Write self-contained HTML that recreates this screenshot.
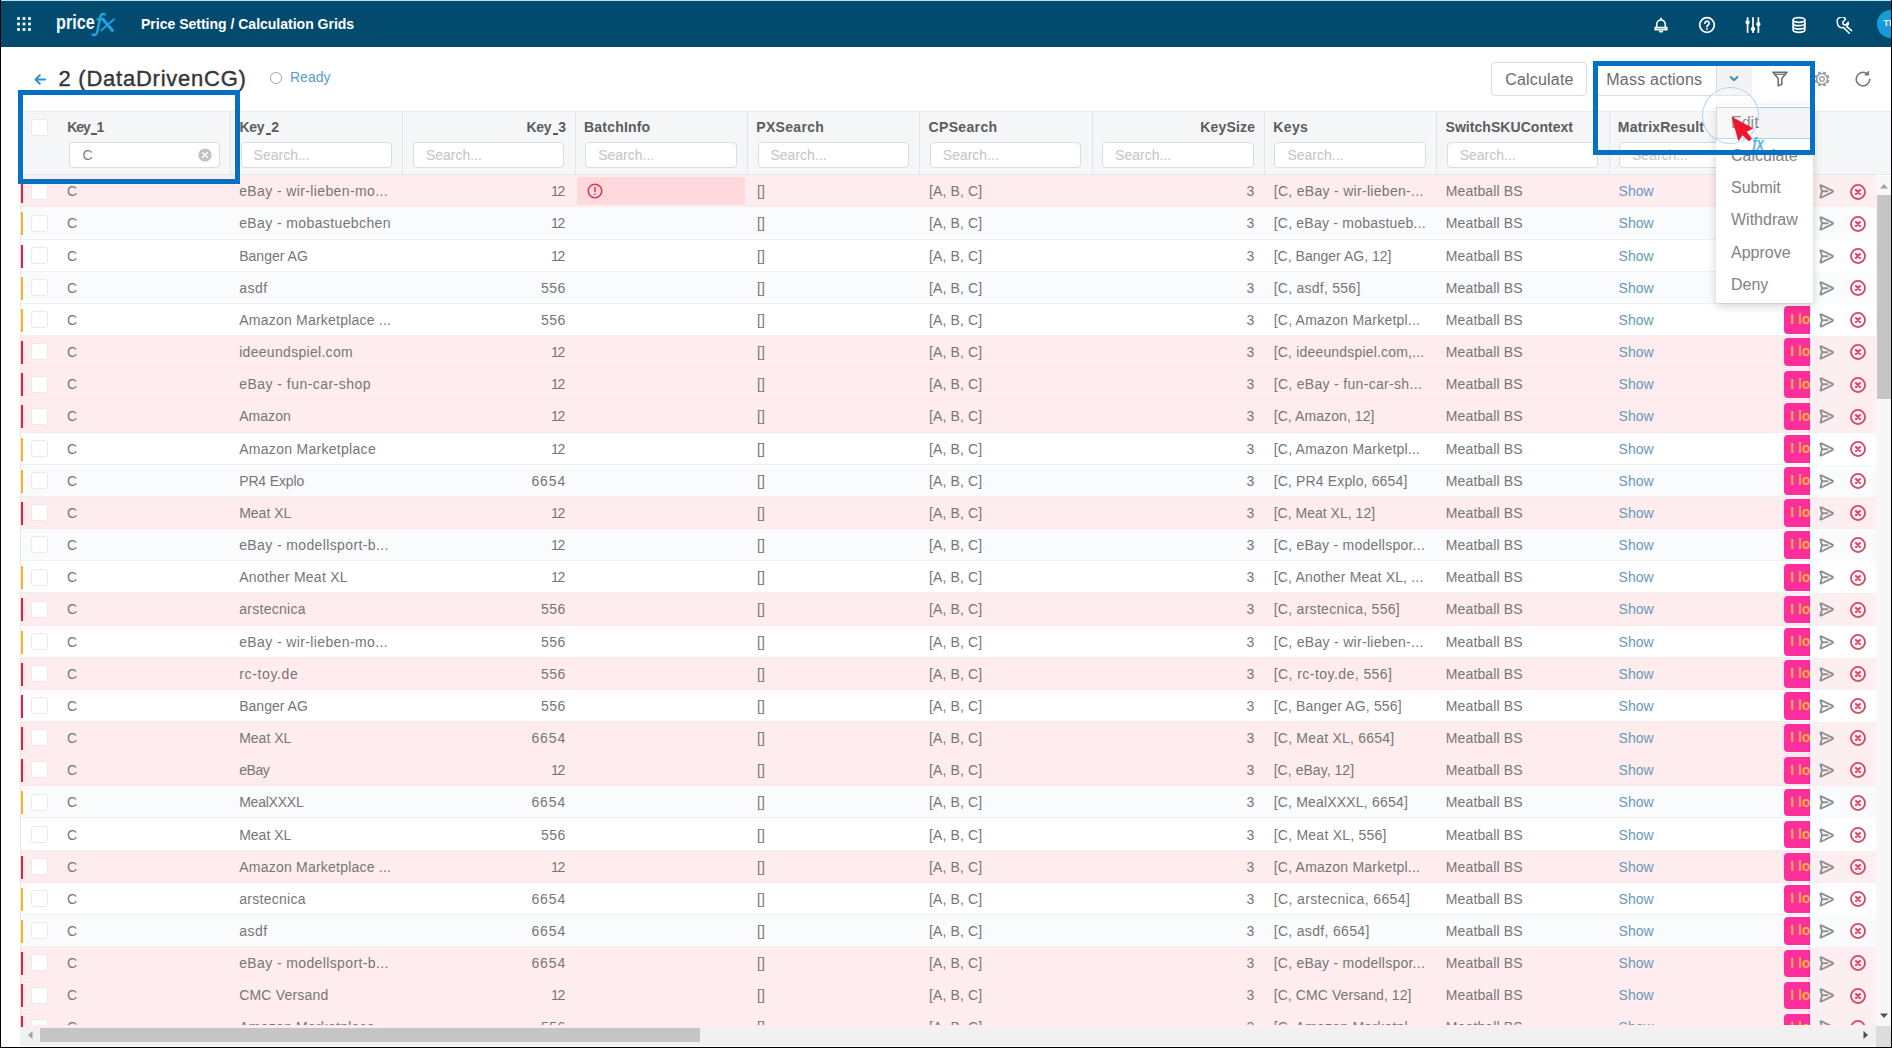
<!DOCTYPE html>
<html><head><meta charset="utf-8"><title>Calculation Grids</title>
<style>
*{box-sizing:border-box;margin:0;padding:0}
html,body{width:1892px;height:1048px;overflow:hidden;background:#fff}
body{font-family:"Liberation Sans",sans-serif;font-size:14px;color:#767676;position:relative}
.abs{position:absolute}
#topbar{left:0;top:1px;width:1892px;height:45.800px;background:#024b6e}
#topline{left:0;top:0;width:1892px;height:1px;background:#b9e1f0}
#title{left:141px;top:16px;color:#fff;font-weight:bold;font-size:14px;white-space:nowrap;line-height:16px}
#h1{left:58.5px;top:64.5px;font-size:22px;letter-spacing:0.76px;color:#363636;-webkit-text-stroke:0.4px #363636;white-space:nowrap;line-height:28px}
#ready{left:290px;top:69px;font-size:14px;color:#589dcb;line-height:16px}
.btn{border:1px solid #dcdcdc;border-radius:4px;background:#fff;font-size:16px;color:#6b6b6b;line-height:20px;white-space:nowrap}
#ghead{left:20px;top:111px;width:1871px;height:64.3px;background:#f5f6f8;border-top:1px solid #ebecee;border-bottom:1px solid #e6e7ea}
.hl{position:absolute;top:119px;font-weight:bold;font-size:14px;color:#5c5c5c;line-height:16px;white-space:nowrap}
.hr{text-align:right}
.inp{position:absolute;top:141.5px;height:26.5px;width:151.5px;border:1px solid #dcdcdc;border-radius:4px;background:#fff;font-size:14px;color:#c4c4c4;line-height:25px;padding-left:12px}
.us{display:inline-block;width:5.600px;height:1.5px;background:#5c5c5c;vertical-align:-2.6px;margin:0 0 0 1.300px}
.sep{position:absolute;top:112px;width:1px;height:63px;background:#e4e5e8}
.row{position:absolute;left:20px;width:1855.500px;height:32.16px;border-bottom:1px solid #eeeff1}
.row.P{background:#ffecef;border-bottom-color:#fde6ea}
.row.W{background:#fff}
.row.G{background:#fafbfd}
.mk{position:absolute;left:0;top:5px;width:3px;height:23px}
.mk.r{background:#e51c43}.mk.y{background:#f6b624}
.cb{position:absolute;left:10.5px;top:7.3px;width:17px;height:17px;border:1px solid #eaeaea;border-radius:3px;background:#fff}
.c{position:absolute;top:0;height:32.16px;line-height:32.6px;white-space:nowrap;overflow:hidden}
.show{color:#6899b9}
.badge{position:absolute;left:1763.5px;top:2.4px;width:60px;height:27.6px;border-radius:4px;background:#ff2e9d;color:#ffb13d;font-weight:bold;font-size:14px;line-height:27px;padding-left:6.800px;letter-spacing:-0.1px;white-space:nowrap;overflow:hidden}
.pin{position:absolute;left:1790px;top:0;width:65.5px;height:32.16px}
.row.P .pin{background:#fdeef1}.row.W .pin{background:#fff}.row.G .pin{background:#fafbfd}
.pin svg{position:absolute}
#menu{left:1716px;top:105px;width:97px;height:198px;background:#fff;border-radius:3px;box-shadow:0 3px 10px rgba(0,0,0,.18)}
.mi{position:absolute;left:15px;font-size:16px;color:#828282;line-height:20px;white-space:nowrap}
.hbox{position:absolute;border:5px solid #0670c4}
</style></head><body>

<div class="abs" id="topline"></div><div class="abs" id="topbar"></div>
<svg class="abs" style="left:17px;top:17px" width="14" height="14" viewBox="0 0 14 14"><rect x="0" y="0" width="3" height="3" rx="0.8" fill="#e6f3fa"/><rect x="5.5" y="0" width="3" height="3" rx="0.8" fill="#e6f3fa"/><rect x="11" y="0" width="3" height="3" rx="0.8" fill="#e6f3fa"/><rect x="0" y="5.5" width="3" height="3" rx="0.8" fill="#e6f3fa"/><rect x="5.5" y="5.5" width="3" height="3" rx="0.8" fill="#e6f3fa"/><rect x="11" y="5.5" width="3" height="3" rx="0.8" fill="#e6f3fa"/><rect x="0" y="11" width="3" height="3" rx="0.8" fill="#e6f3fa"/><rect x="5.5" y="11" width="3" height="3" rx="0.8" fill="#e6f3fa"/><rect x="11" y="11" width="3" height="3" rx="0.8" fill="#e6f3fa"/></svg>
<div class="abs" style="left:55.5px;top:9.8px;color:#f4fafd;font-weight:bold;font-size:19.5px;line-height:24px;transform:scaleX(0.83);transform-origin:0 0;white-space:nowrap">price</div>
<svg class="abs" style="left:90px;top:10px" width="28" height="28" viewBox="0 0 28 28" fill="none" stroke="#1fa2de" stroke-linecap="round"><path d="M14.6 4.300C11.400 3.100 10.500 5.600 10 8.200L7.400 21.500C6.800 24.600 4.900 25.600 2.800 24.600" stroke-width="2.500"/><path d="M7.300 9.300h6.600" stroke-width="2.100"/><path d="M12.800 9.200l9.600 11.200" stroke-width="3.100"/><path d="M24 9.200L11.200 20.400" stroke-width="1.900"/></svg>
<div class="abs" id="title">Price Setting / Calculation Grids</div>
<svg class="abs" style="left:1651.5px;top:16.2px" width="18" height="18" viewBox="0 0 18 18" fill="none" stroke="#fff" stroke-width="1.7" stroke-linecap="round" stroke-linejoin="round"><path d="M4.700 11.200V8.300a4.300 4.300 0 0 1 8.600 0v2.900" stroke-width="1.600"/><path d="M3 11.300h12v2.600H3z" fill="#fff" stroke-width="1.200"/><path d="M5 12.600h8" stroke="#8a9aa6" stroke-width="0.900"/><path d="M7.700 15.600h2.600" stroke-width="1.600"/><path d="M9 2.300v1.200" stroke-width="1.600"/></svg>
<svg class="abs" style="left:1697.5px;top:16.0px" width="18" height="18" viewBox="0 0 18 18" fill="none" stroke="#fff" stroke-width="1.7" stroke-linecap="round" stroke-linejoin="round"><circle cx="9" cy="9" r="7.3"/><path d="M6.9 7.2a2.1 2.1 0 1 1 3.2 1.8c-.7.45-1.1.9-1.1 1.7"/><path d="M9 12.9v.2"/></svg>
<svg class="abs" style="left:1743.5px;top:16.0px" width="18" height="18" viewBox="0 0 18 18" fill="none" stroke="#fff" stroke-width="1.7" stroke-linecap="round" stroke-linejoin="round"><path d="M3.6 1.8v14.4M9 1.8v14.4M14.4 1.8v14.4"/><circle cx="3.600" cy="6.300" r="1.300" fill="#fff"/><circle cx="9" cy="13" r="1.300" fill="#fff"/><circle cx="14.400" cy="8.200" r="1.300" fill="#fff"/></svg>
<svg class="abs" style="left:1789.5px;top:16.0px" width="18" height="18" viewBox="0 0 18 18" fill="none" stroke="#fff" stroke-width="1.7" stroke-linecap="round" stroke-linejoin="round"><ellipse cx="9" cy="4" rx="5.8" ry="2.3"/><path d="M3.2 4v10c0 1.3 2.6 2.3 5.8 2.3s5.8-1 5.8-2.3V4"/><path d="M3.2 7.4c0 1.3 2.6 2.3 5.8 2.3s5.8-1 5.8-2.3"/><path d="M3.2 10.8c0 1.3 2.6 2.3 5.8 2.3s5.8-1 5.8-2.3"/></svg>
<svg class="abs" style="left:1835.0px;top:16.8px" width="18" height="18" viewBox="0 0 18 18" fill="none" stroke="#fff" stroke-width="1.7" stroke-linecap="round" stroke-linejoin="round"><path d="M10.600 2.300A4.500 4.500 0 0 0 2.500 6.200 4.500 4.500 0 0 0 8.400 10.400L14.300 16.300M10.600 2.300 7.700 5.200 8.300 7.500 10.600 8.100 13.300 5.400A4.500 4.500 0 0 1 11.800 9.600L16.600 13.600" stroke-width="1.500"/></svg>
<div class="abs" style="left:1876.6px;top:9.7px;width:28px;height:28px;border-radius:50%;background:#1a9ad8"></div>
<div class="abs" style="left:1883.5px;top:18px;color:#e8f6fd;font-weight:bold;font-size:9px;line-height:11px;white-space:nowrap">TI</div>
<svg class="abs" style="left:33px;top:72px" width="14" height="14" viewBox="0 0 14 14" fill="none" stroke="#2f94cf" stroke-width="2.100" stroke-linecap="round" stroke-linejoin="round"><path d="M12 7.500H3M6.800 3.300 2.600 7.500l4.200 4.200"/></svg>
<div class="abs" id="h1">2 (DataDrivenCG)</div>
<div class="abs" style="left:270px;top:72px;width:11.500px;height:11.500px;border-radius:50%;border:1.800px solid #a3a3a3"></div>
<div class="abs" id="ready">Ready</div>
<div class="abs btn" style="left:1491px;top:62px;width:96px;height:34px;padding:7px 0 0 13.200px;letter-spacing:0.2px">Calculate</div>
<div class="abs btn" style="left:1596px;top:62px;width:156px;height:34px;padding:7px 0 0 9.300px;letter-spacing:0.22px">Mass actions</div>
<div class="abs" style="left:1716px;top:63px;width:35.5px;height:32px;background:#f3f3f5;border-left:1px solid #dcdcdc;border-radius:0 3px 3px 0"></div>
<svg class="abs" style="left:1728px;top:74px" width="12" height="10" viewBox="0 0 12 10" fill="none" stroke="#3f8bb8" stroke-width="1.900" stroke-linecap="round" stroke-linejoin="round"><path d="M2.700 3l3.300 3.200L9.300 3"/></svg>
<svg class="abs" style="left:1771px;top:70px" width="18" height="18" viewBox="0 0 18 18" fill="none" stroke="#6a6a6a" stroke-width="1.5" stroke-linejoin="round"><path d="M2 2.200h14l-5.200 6.300v5.800l-3.600 1.600V8.500z"/><path d="M3.300 4.300h11.400" stroke-width="1.200"/></svg>
<svg class="abs" style="left:1813.400px;top:70px" width="18" height="18" viewBox="0 0 18 18" fill="none" stroke="#9a9a9a"><circle cx="9" cy="9" r="5.400" stroke-width="1.400"/><g stroke-width="2.800"><path d="M13.90 11.03L15.93 11.87"/><path d="M11.03 13.90L11.87 15.93"/><path d="M6.97 13.90L6.13 15.93"/><path d="M4.10 11.03L2.07 11.87"/><path d="M4.10 6.97L2.07 6.13"/><path d="M6.97 4.10L6.13 2.07"/><path d="M11.03 4.10L11.87 2.07"/><path d="M13.90 6.97L15.93 6.13"/></g><circle cx="9" cy="9" r="2.300" stroke-width="1.300"/></svg>
<svg class="abs" style="left:1853.900px;top:70px" width="18" height="18" viewBox="0 0 18 18" fill="none" stroke="#747474" stroke-width="1.600" stroke-linecap="round" stroke-linejoin="round"><path d="M15.800 9.300a6.800 6.800 0 1 1-3.300-6"/><path d="M14.700 1.400v3.700h-3.700z" fill="#747474" stroke-width="0.800"/></svg>
<div class="abs" id="ghead"></div>
<div class="cb" style="left:30.5px;top:118.500px"></div>
<div class="hl" style="left:67.3px"><span style="letter-spacing:-1.1px">Key</span><i class="us"></i>1</div>
<div class="inp" style="left:68.5px;color:#7d7d7d;padding-left:13px">C</div>
<svg class="abs" style="left:197.500px;top:148px" width="14" height="14" viewBox="0 0 14 14"><circle cx="7" cy="7" r="6.600" fill="#c2c2c2"/><path d="M4.700 4.700l4.600 4.600M9.300 4.700l-4.600 4.600" stroke="#fff" stroke-width="1.500" stroke-linecap="round"/></svg>
<div class="sep" style="left:230.1px"></div>
<div class="hl" style="left:239.4px"><span style="letter-spacing:-0.25px">Key</span><i class="us"></i>2</div>
<div class="inp" style="left:240.6px">Search...</div>
<div class="sep" style="left:402.4px"></div>
<div class="hl hr" style="left:402.9px;width:163.2px"><span style="letter-spacing:-0.25px">Key</span><i class="us"></i>3</div>
<div class="inp" style="left:412.9px">Search...</div>
<div class="sep" style="left:574.7px"></div>
<div class="hl" style="left:584.0px"><span style="letter-spacing:0.2px">BatchInfo</span></div>
<div class="inp" style="left:585.2px">Search...</div>
<div class="sep" style="left:747.0px"></div>
<div class="hl" style="left:756.3px"><span style="letter-spacing:0.3px">PXSearch</span></div>
<div class="inp" style="left:757.5px">Search...</div>
<div class="sep" style="left:919.3px"></div>
<div class="hl" style="left:928.6px"><span style="letter-spacing:0.33px">CPSearch</span></div>
<div class="inp" style="left:929.8px">Search...</div>
<div class="sep" style="left:1091.6px"></div>
<div class="hl hr" style="left:1092.1px;width:163.2px"><span style="letter-spacing:0.2px">KeySize</span></div>
<div class="inp" style="left:1102.1px">Search...</div>
<div class="sep" style="left:1263.9px"></div>
<div class="hl" style="left:1273.2px"><span style="letter-spacing:0.4px">Keys</span></div>
<div class="inp" style="left:1274.4px">Search...</div>
<div class="sep" style="left:1436.2px"></div>
<div class="hl" style="left:1445.5px"><span style="letter-spacing:0.05px">SwitchSKUContext</span></div>
<div class="inp" style="left:1446.7px">Search...</div>
<div class="sep" style="left:1608.5px"></div>
<div class="hl" style="left:1617.8px"><span style="letter-spacing:0.2px">MatrixResult</span></div>
<div class="inp" style="left:1619.0px">Search...</div>
<div class="sep" style="left:1780.8px"></div>
<div class="row P" style="top:175.30px"><div class="mk r"></div><div class="cb"></div><div class="c " style="left:47.0px;width:150.0px"><span style="letter-spacing:-0.025px">C</span></div><div class="c " style="left:219.2px;width:165.0px"><span style="letter-spacing:0.380px">eBay - wir-lieben-mo...</span></div><div class="c " style="left:392.0px;width:153.2px;text-align:right"><span style="letter-spacing:-1.278px;margin-right:1.278px">12</span></div><div style="position:absolute;left:557px;top:1.500px;width:168px;height:28.500px;background:#ffd9dc;border-radius:2px"></div><svg style="position:absolute;left:567px;top:8px" width="16" height="16" viewBox="0 0 16 16" fill="none" stroke="#d93553" stroke-width="1.500" stroke-linecap="round"><circle cx="8" cy="8" r="6.800"/><path d="M8 4.600v3.800M8 11v.2"/></svg><div class="c " style="left:737.0px;width:40.0px"><span style="letter-spacing:0.219px">[]</span></div><div class="c " style="left:909.0px;width:150.0px"><span style="letter-spacing:0.134px">[A, B, C]</span></div><div class="c " style="left:1081.0px;width:153.4px;text-align:right"><span style="letter-spacing:0.203px;margin-right:-0.203px">3</span></div><div class="c " style="left:1253.7px;width:165.0px"><span style="letter-spacing:0.301px">[C, eBay - wir-lieben-...</span></div><div class="c " style="left:1425.7px;width:160.0px"><span style="letter-spacing:0.152px">Meatball BS</span></div><div class="c show" style="left:1598.5px;width:100.0px"><span style="letter-spacing:0.056px">Show</span></div><div class="badge">I lo</div><div class="pin"><svg style="left:6.500px;top:7px" width="19" height="19" viewBox="0 0 19 19" fill="none" stroke="#909090" stroke-width="1.900" stroke-linejoin="round" stroke-linecap="round"><path d="M4.300 3.300Q3.300 2.800 3.500 3.900L5 9.300 3.500 14.900Q3.300 15.900 4.300 15.500L15.400 10.100Q16.600 9.300 15.400 8.600z"/><path d="M5.200 9.300h5.400"/></svg><svg style="left:39.300px;top:7.300px" width="18" height="18" viewBox="0 0 18 18" fill="none" stroke="#db4562" stroke-width="1.800" stroke-linecap="round"><circle cx="9" cy="9" r="7.050"/><path d="M7 7l4 4M11 7l-4 4" stroke-width="2.100"/></svg></div></div>
<div class="row G" style="top:207.46px"><div class="mk y"></div><div class="cb"></div><div class="c " style="left:47.0px;width:150.0px"><span style="letter-spacing:-0.025px">C</span></div><div class="c " style="left:219.2px;width:165.0px"><span style="letter-spacing:0.390px">eBay - mobastuebchen</span></div><div class="c " style="left:392.0px;width:153.2px;text-align:right"><span style="letter-spacing:-1.278px;margin-right:1.278px">12</span></div><div class="c " style="left:737.0px;width:40.0px"><span style="letter-spacing:0.219px">[]</span></div><div class="c " style="left:909.0px;width:150.0px"><span style="letter-spacing:0.134px">[A, B, C]</span></div><div class="c " style="left:1081.0px;width:153.4px;text-align:right"><span style="letter-spacing:0.203px;margin-right:-0.203px">3</span></div><div class="c " style="left:1253.7px;width:165.0px"><span style="letter-spacing:0.224px">[C, eBay - mobastueb...</span></div><div class="c " style="left:1425.7px;width:160.0px"><span style="letter-spacing:0.152px">Meatball BS</span></div><div class="c show" style="left:1598.5px;width:100.0px"><span style="letter-spacing:0.056px">Show</span></div><div class="badge">I lo</div><div class="pin"><svg style="left:6.500px;top:7px" width="19" height="19" viewBox="0 0 19 19" fill="none" stroke="#909090" stroke-width="1.900" stroke-linejoin="round" stroke-linecap="round"><path d="M4.300 3.300Q3.300 2.800 3.500 3.900L5 9.300 3.500 14.900Q3.300 15.900 4.300 15.500L15.400 10.100Q16.600 9.300 15.400 8.600z"/><path d="M5.200 9.300h5.400"/></svg><svg style="left:39.300px;top:7.300px" width="18" height="18" viewBox="0 0 18 18" fill="none" stroke="#db4562" stroke-width="1.800" stroke-linecap="round"><circle cx="9" cy="9" r="7.050"/><path d="M7 7l4 4M11 7l-4 4" stroke-width="2.100"/></svg></div></div>
<div class="row W" style="top:239.62px"><div class="mk r"></div><div class="cb"></div><div class="c " style="left:47.0px;width:150.0px"><span style="letter-spacing:-0.025px">C</span></div><div class="c " style="left:219.2px;width:165.0px"><span style="letter-spacing:0.025px">Banger AG</span></div><div class="c " style="left:392.0px;width:153.2px;text-align:right"><span style="letter-spacing:-1.278px;margin-right:1.278px">12</span></div><div class="c " style="left:737.0px;width:40.0px"><span style="letter-spacing:0.219px">[]</span></div><div class="c " style="left:909.0px;width:150.0px"><span style="letter-spacing:0.134px">[A, B, C]</span></div><div class="c " style="left:1081.0px;width:153.4px;text-align:right"><span style="letter-spacing:0.203px;margin-right:-0.203px">3</span></div><div class="c " style="left:1253.7px;width:165.0px"><span style="letter-spacing:0.017px">[C, Banger AG, 12]</span></div><div class="c " style="left:1425.7px;width:160.0px"><span style="letter-spacing:0.152px">Meatball BS</span></div><div class="c show" style="left:1598.5px;width:100.0px"><span style="letter-spacing:0.056px">Show</span></div><div class="badge">I lo</div><div class="pin"><svg style="left:6.500px;top:7px" width="19" height="19" viewBox="0 0 19 19" fill="none" stroke="#909090" stroke-width="1.900" stroke-linejoin="round" stroke-linecap="round"><path d="M4.300 3.300Q3.300 2.800 3.500 3.900L5 9.300 3.500 14.900Q3.300 15.900 4.300 15.500L15.400 10.100Q16.600 9.300 15.400 8.600z"/><path d="M5.200 9.300h5.400"/></svg><svg style="left:39.300px;top:7.300px" width="18" height="18" viewBox="0 0 18 18" fill="none" stroke="#db4562" stroke-width="1.800" stroke-linecap="round"><circle cx="9" cy="9" r="7.050"/><path d="M7 7l4 4M11 7l-4 4" stroke-width="2.100"/></svg></div></div>
<div class="row G" style="top:271.78px"><div class="mk y"></div><div class="cb"></div><div class="c " style="left:47.0px;width:150.0px"><span style="letter-spacing:-0.025px">C</span></div><div class="c " style="left:219.2px;width:165.0px"><span style="letter-spacing:0.477px">asdf</span></div><div class="c " style="left:392.0px;width:153.2px;text-align:right"><span style="letter-spacing:0.470px;margin-right:-0.470px">556</span></div><div class="c " style="left:737.0px;width:40.0px"><span style="letter-spacing:0.219px">[]</span></div><div class="c " style="left:909.0px;width:150.0px"><span style="letter-spacing:0.134px">[A, B, C]</span></div><div class="c " style="left:1081.0px;width:153.4px;text-align:right"><span style="letter-spacing:0.203px;margin-right:-0.203px">3</span></div><div class="c " style="left:1253.7px;width:165.0px"><span style="letter-spacing:0.255px">[C, asdf, 556]</span></div><div class="c " style="left:1425.7px;width:160.0px"><span style="letter-spacing:0.152px">Meatball BS</span></div><div class="c show" style="left:1598.5px;width:100.0px"><span style="letter-spacing:0.056px">Show</span></div><div class="badge">I lo</div><div class="pin"><svg style="left:6.500px;top:7px" width="19" height="19" viewBox="0 0 19 19" fill="none" stroke="#909090" stroke-width="1.900" stroke-linejoin="round" stroke-linecap="round"><path d="M4.300 3.300Q3.300 2.800 3.500 3.900L5 9.300 3.500 14.900Q3.300 15.900 4.300 15.500L15.400 10.100Q16.600 9.300 15.400 8.600z"/><path d="M5.200 9.300h5.400"/></svg><svg style="left:39.300px;top:7.300px" width="18" height="18" viewBox="0 0 18 18" fill="none" stroke="#db4562" stroke-width="1.800" stroke-linecap="round"><circle cx="9" cy="9" r="7.050"/><path d="M7 7l4 4M11 7l-4 4" stroke-width="2.100"/></svg></div></div>
<div class="row W" style="top:303.94px"><div class="mk y"></div><div class="cb"></div><div class="c " style="left:47.0px;width:150.0px"><span style="letter-spacing:-0.025px">C</span></div><div class="c " style="left:219.2px;width:165.0px"><span style="letter-spacing:0.226px">Amazon Marketplace ...</span></div><div class="c " style="left:392.0px;width:153.2px;text-align:right"><span style="letter-spacing:0.470px;margin-right:-0.470px">556</span></div><div class="c " style="left:737.0px;width:40.0px"><span style="letter-spacing:0.219px">[]</span></div><div class="c " style="left:909.0px;width:150.0px"><span style="letter-spacing:0.134px">[A, B, C]</span></div><div class="c " style="left:1081.0px;width:153.4px;text-align:right"><span style="letter-spacing:0.203px;margin-right:-0.203px">3</span></div><div class="c " style="left:1253.7px;width:165.0px"><span style="letter-spacing:0.223px">[C, Amazon Marketpl...</span></div><div class="c " style="left:1425.7px;width:160.0px"><span style="letter-spacing:0.152px">Meatball BS</span></div><div class="c show" style="left:1598.5px;width:100.0px"><span style="letter-spacing:0.056px">Show</span></div><div class="badge">I lo</div><div class="pin"><svg style="left:6.500px;top:7px" width="19" height="19" viewBox="0 0 19 19" fill="none" stroke="#909090" stroke-width="1.900" stroke-linejoin="round" stroke-linecap="round"><path d="M4.300 3.300Q3.300 2.800 3.500 3.900L5 9.300 3.500 14.900Q3.300 15.900 4.300 15.500L15.400 10.100Q16.600 9.300 15.400 8.600z"/><path d="M5.200 9.300h5.400"/></svg><svg style="left:39.300px;top:7.300px" width="18" height="18" viewBox="0 0 18 18" fill="none" stroke="#db4562" stroke-width="1.800" stroke-linecap="round"><circle cx="9" cy="9" r="7.050"/><path d="M7 7l4 4M11 7l-4 4" stroke-width="2.100"/></svg></div></div>
<div class="row P" style="top:336.10px"><div class="mk r"></div><div class="cb"></div><div class="c " style="left:47.0px;width:150.0px"><span style="letter-spacing:-0.025px">C</span></div><div class="c " style="left:219.2px;width:165.0px"><span style="letter-spacing:0.302px">ideeundspiel.com</span></div><div class="c " style="left:392.0px;width:153.2px;text-align:right"><span style="letter-spacing:-1.278px;margin-right:1.278px">12</span></div><div class="c " style="left:737.0px;width:40.0px"><span style="letter-spacing:0.219px">[]</span></div><div class="c " style="left:909.0px;width:150.0px"><span style="letter-spacing:0.134px">[A, B, C]</span></div><div class="c " style="left:1081.0px;width:153.4px;text-align:right"><span style="letter-spacing:0.203px;margin-right:-0.203px">3</span></div><div class="c " style="left:1253.7px;width:165.0px"><span style="letter-spacing:0.183px">[C, ideeundspiel.com,...</span></div><div class="c " style="left:1425.7px;width:160.0px"><span style="letter-spacing:0.152px">Meatball BS</span></div><div class="c show" style="left:1598.5px;width:100.0px"><span style="letter-spacing:0.056px">Show</span></div><div class="badge">I lo</div><div class="pin"><svg style="left:6.500px;top:7px" width="19" height="19" viewBox="0 0 19 19" fill="none" stroke="#909090" stroke-width="1.900" stroke-linejoin="round" stroke-linecap="round"><path d="M4.300 3.300Q3.300 2.800 3.500 3.900L5 9.300 3.500 14.900Q3.300 15.900 4.300 15.500L15.400 10.100Q16.600 9.300 15.400 8.600z"/><path d="M5.200 9.300h5.400"/></svg><svg style="left:39.300px;top:7.300px" width="18" height="18" viewBox="0 0 18 18" fill="none" stroke="#db4562" stroke-width="1.800" stroke-linecap="round"><circle cx="9" cy="9" r="7.050"/><path d="M7 7l4 4M11 7l-4 4" stroke-width="2.100"/></svg></div></div>
<div class="row P" style="top:368.26px"><div class="mk r"></div><div class="cb"></div><div class="c " style="left:47.0px;width:150.0px"><span style="letter-spacing:-0.025px">C</span></div><div class="c " style="left:219.2px;width:165.0px"><span style="letter-spacing:0.464px">eBay - fun-car-shop</span></div><div class="c " style="left:392.0px;width:153.2px;text-align:right"><span style="letter-spacing:-1.278px;margin-right:1.278px">12</span></div><div class="c " style="left:737.0px;width:40.0px"><span style="letter-spacing:0.219px">[]</span></div><div class="c " style="left:909.0px;width:150.0px"><span style="letter-spacing:0.134px">[A, B, C]</span></div><div class="c " style="left:1081.0px;width:153.4px;text-align:right"><span style="letter-spacing:0.203px;margin-right:-0.203px">3</span></div><div class="c " style="left:1253.7px;width:165.0px"><span style="letter-spacing:0.316px">[C, eBay - fun-car-sh...</span></div><div class="c " style="left:1425.7px;width:160.0px"><span style="letter-spacing:0.152px">Meatball BS</span></div><div class="c show" style="left:1598.5px;width:100.0px"><span style="letter-spacing:0.056px">Show</span></div><div class="badge">I lo</div><div class="pin"><svg style="left:6.500px;top:7px" width="19" height="19" viewBox="0 0 19 19" fill="none" stroke="#909090" stroke-width="1.900" stroke-linejoin="round" stroke-linecap="round"><path d="M4.300 3.300Q3.300 2.800 3.500 3.900L5 9.300 3.500 14.900Q3.300 15.900 4.300 15.500L15.400 10.100Q16.600 9.300 15.400 8.600z"/><path d="M5.200 9.300h5.400"/></svg><svg style="left:39.300px;top:7.300px" width="18" height="18" viewBox="0 0 18 18" fill="none" stroke="#db4562" stroke-width="1.800" stroke-linecap="round"><circle cx="9" cy="9" r="7.050"/><path d="M7 7l4 4M11 7l-4 4" stroke-width="2.100"/></svg></div></div>
<div class="row P" style="top:400.42px"><div class="mk r"></div><div class="cb"></div><div class="c " style="left:47.0px;width:150.0px"><span style="letter-spacing:-0.025px">C</span></div><div class="c " style="left:219.2px;width:165.0px"><span style="letter-spacing:0.048px">Amazon</span></div><div class="c " style="left:392.0px;width:153.2px;text-align:right"><span style="letter-spacing:-1.278px;margin-right:1.278px">12</span></div><div class="c " style="left:737.0px;width:40.0px"><span style="letter-spacing:0.219px">[]</span></div><div class="c " style="left:909.0px;width:150.0px"><span style="letter-spacing:0.134px">[A, B, C]</span></div><div class="c " style="left:1081.0px;width:153.4px;text-align:right"><span style="letter-spacing:0.203px;margin-right:-0.203px">3</span></div><div class="c " style="left:1253.7px;width:165.0px"><span style="letter-spacing:0.085px">[C, Amazon, 12]</span></div><div class="c " style="left:1425.7px;width:160.0px"><span style="letter-spacing:0.152px">Meatball BS</span></div><div class="c show" style="left:1598.5px;width:100.0px"><span style="letter-spacing:0.056px">Show</span></div><div class="badge">I lo</div><div class="pin"><svg style="left:6.500px;top:7px" width="19" height="19" viewBox="0 0 19 19" fill="none" stroke="#909090" stroke-width="1.900" stroke-linejoin="round" stroke-linecap="round"><path d="M4.300 3.300Q3.300 2.800 3.500 3.900L5 9.300 3.500 14.900Q3.300 15.900 4.300 15.500L15.400 10.100Q16.600 9.300 15.400 8.600z"/><path d="M5.200 9.300h5.400"/></svg><svg style="left:39.300px;top:7.300px" width="18" height="18" viewBox="0 0 18 18" fill="none" stroke="#db4562" stroke-width="1.800" stroke-linecap="round"><circle cx="9" cy="9" r="7.050"/><path d="M7 7l4 4M11 7l-4 4" stroke-width="2.100"/></svg></div></div>
<div class="row W" style="top:432.58px"><div class="mk y"></div><div class="cb"></div><div class="c " style="left:47.0px;width:150.0px"><span style="letter-spacing:-0.025px">C</span></div><div class="c " style="left:219.2px;width:165.0px"><span style="letter-spacing:0.293px">Amazon Marketplace</span></div><div class="c " style="left:392.0px;width:153.2px;text-align:right"><span style="letter-spacing:-1.278px;margin-right:1.278px">12</span></div><div class="c " style="left:737.0px;width:40.0px"><span style="letter-spacing:0.219px">[]</span></div><div class="c " style="left:909.0px;width:150.0px"><span style="letter-spacing:0.134px">[A, B, C]</span></div><div class="c " style="left:1081.0px;width:153.4px;text-align:right"><span style="letter-spacing:0.203px;margin-right:-0.203px">3</span></div><div class="c " style="left:1253.7px;width:165.0px"><span style="letter-spacing:0.223px">[C, Amazon Marketpl...</span></div><div class="c " style="left:1425.7px;width:160.0px"><span style="letter-spacing:0.152px">Meatball BS</span></div><div class="c show" style="left:1598.5px;width:100.0px"><span style="letter-spacing:0.056px">Show</span></div><div class="badge">I lo</div><div class="pin"><svg style="left:6.500px;top:7px" width="19" height="19" viewBox="0 0 19 19" fill="none" stroke="#909090" stroke-width="1.900" stroke-linejoin="round" stroke-linecap="round"><path d="M4.300 3.300Q3.300 2.800 3.500 3.900L5 9.300 3.500 14.900Q3.300 15.900 4.300 15.500L15.400 10.100Q16.600 9.300 15.400 8.600z"/><path d="M5.200 9.300h5.400"/></svg><svg style="left:39.300px;top:7.300px" width="18" height="18" viewBox="0 0 18 18" fill="none" stroke="#db4562" stroke-width="1.800" stroke-linecap="round"><circle cx="9" cy="9" r="7.050"/><path d="M7 7l4 4M11 7l-4 4" stroke-width="2.100"/></svg></div></div>
<div class="row G" style="top:464.74px"><div class="mk y"></div><div class="cb"></div><div class="c " style="left:47.0px;width:150.0px"><span style="letter-spacing:-0.025px">C</span></div><div class="c " style="left:219.2px;width:165.0px"><span style="letter-spacing:-0.145px">PR4 Explo</span></div><div class="c " style="left:392.0px;width:153.2px;text-align:right"><span style="letter-spacing:0.881px;margin-right:-0.881px">6654</span></div><div class="c " style="left:737.0px;width:40.0px"><span style="letter-spacing:0.219px">[]</span></div><div class="c " style="left:909.0px;width:150.0px"><span style="letter-spacing:0.134px">[A, B, C]</span></div><div class="c " style="left:1081.0px;width:153.4px;text-align:right"><span style="letter-spacing:0.203px;margin-right:-0.203px">3</span></div><div class="c " style="left:1253.7px;width:165.0px"><span style="letter-spacing:0.150px">[C, PR4 Explo, 6654]</span></div><div class="c " style="left:1425.7px;width:160.0px"><span style="letter-spacing:0.152px">Meatball BS</span></div><div class="c show" style="left:1598.5px;width:100.0px"><span style="letter-spacing:0.056px">Show</span></div><div class="badge">I lo</div><div class="pin"><svg style="left:6.500px;top:7px" width="19" height="19" viewBox="0 0 19 19" fill="none" stroke="#909090" stroke-width="1.900" stroke-linejoin="round" stroke-linecap="round"><path d="M4.300 3.300Q3.300 2.800 3.500 3.900L5 9.300 3.500 14.900Q3.300 15.900 4.300 15.500L15.400 10.100Q16.600 9.300 15.400 8.600z"/><path d="M5.200 9.300h5.400"/></svg><svg style="left:39.300px;top:7.300px" width="18" height="18" viewBox="0 0 18 18" fill="none" stroke="#db4562" stroke-width="1.800" stroke-linecap="round"><circle cx="9" cy="9" r="7.050"/><path d="M7 7l4 4M11 7l-4 4" stroke-width="2.100"/></svg></div></div>
<div class="row P" style="top:496.90px"><div class="mk r"></div><div class="cb"></div><div class="c " style="left:47.0px;width:150.0px"><span style="letter-spacing:-0.025px">C</span></div><div class="c " style="left:219.2px;width:165.0px"><span style="letter-spacing:-0.007px">Meat XL</span></div><div class="c " style="left:392.0px;width:153.2px;text-align:right"><span style="letter-spacing:-1.278px;margin-right:1.278px">12</span></div><div class="c " style="left:737.0px;width:40.0px"><span style="letter-spacing:0.219px">[]</span></div><div class="c " style="left:909.0px;width:150.0px"><span style="letter-spacing:0.134px">[A, B, C]</span></div><div class="c " style="left:1081.0px;width:153.4px;text-align:right"><span style="letter-spacing:0.203px;margin-right:-0.203px">3</span></div><div class="c " style="left:1253.7px;width:165.0px"><span style="letter-spacing:0.015px">[C, Meat XL, 12]</span></div><div class="c " style="left:1425.7px;width:160.0px"><span style="letter-spacing:0.152px">Meatball BS</span></div><div class="c show" style="left:1598.5px;width:100.0px"><span style="letter-spacing:0.056px">Show</span></div><div class="badge">I lo</div><div class="pin"><svg style="left:6.500px;top:7px" width="19" height="19" viewBox="0 0 19 19" fill="none" stroke="#909090" stroke-width="1.900" stroke-linejoin="round" stroke-linecap="round"><path d="M4.300 3.300Q3.300 2.800 3.500 3.900L5 9.300 3.500 14.900Q3.300 15.900 4.300 15.500L15.400 10.100Q16.600 9.300 15.400 8.600z"/><path d="M5.200 9.300h5.400"/></svg><svg style="left:39.300px;top:7.300px" width="18" height="18" viewBox="0 0 18 18" fill="none" stroke="#db4562" stroke-width="1.800" stroke-linecap="round"><circle cx="9" cy="9" r="7.050"/><path d="M7 7l4 4M11 7l-4 4" stroke-width="2.100"/></svg></div></div>
<div class="row G" style="top:529.06px"><div class="cb"></div><div class="c " style="left:47.0px;width:150.0px"><span style="letter-spacing:-0.025px">C</span></div><div class="c " style="left:219.2px;width:165.0px"><span style="letter-spacing:0.380px">eBay - modellsport-b...</span></div><div class="c " style="left:392.0px;width:153.2px;text-align:right"><span style="letter-spacing:-1.278px;margin-right:1.278px">12</span></div><div class="c " style="left:737.0px;width:40.0px"><span style="letter-spacing:0.219px">[]</span></div><div class="c " style="left:909.0px;width:150.0px"><span style="letter-spacing:0.134px">[A, B, C]</span></div><div class="c " style="left:1081.0px;width:153.4px;text-align:right"><span style="letter-spacing:0.203px;margin-right:-0.203px">3</span></div><div class="c " style="left:1253.7px;width:165.0px"><span style="letter-spacing:0.243px">[C, eBay - modellspor...</span></div><div class="c " style="left:1425.7px;width:160.0px"><span style="letter-spacing:0.152px">Meatball BS</span></div><div class="c show" style="left:1598.5px;width:100.0px"><span style="letter-spacing:0.056px">Show</span></div><div class="badge">I lo</div><div class="pin"><svg style="left:6.500px;top:7px" width="19" height="19" viewBox="0 0 19 19" fill="none" stroke="#909090" stroke-width="1.900" stroke-linejoin="round" stroke-linecap="round"><path d="M4.300 3.300Q3.300 2.800 3.500 3.900L5 9.300 3.500 14.900Q3.300 15.900 4.300 15.500L15.400 10.100Q16.600 9.300 15.400 8.600z"/><path d="M5.200 9.300h5.400"/></svg><svg style="left:39.300px;top:7.300px" width="18" height="18" viewBox="0 0 18 18" fill="none" stroke="#db4562" stroke-width="1.800" stroke-linecap="round"><circle cx="9" cy="9" r="7.050"/><path d="M7 7l4 4M11 7l-4 4" stroke-width="2.100"/></svg></div></div>
<div class="row W" style="top:561.22px"><div class="mk y"></div><div class="cb"></div><div class="c " style="left:47.0px;width:150.0px"><span style="letter-spacing:-0.025px">C</span></div><div class="c " style="left:219.2px;width:165.0px"><span style="letter-spacing:0.231px">Another Meat XL</span></div><div class="c " style="left:392.0px;width:153.2px;text-align:right"><span style="letter-spacing:-1.278px;margin-right:1.278px">12</span></div><div class="c " style="left:737.0px;width:40.0px"><span style="letter-spacing:0.219px">[]</span></div><div class="c " style="left:909.0px;width:150.0px"><span style="letter-spacing:0.134px">[A, B, C]</span></div><div class="c " style="left:1081.0px;width:153.4px;text-align:right"><span style="letter-spacing:0.203px;margin-right:-0.203px">3</span></div><div class="c " style="left:1253.7px;width:165.0px"><span style="letter-spacing:0.177px">[C, Another Meat XL, ...</span></div><div class="c " style="left:1425.7px;width:160.0px"><span style="letter-spacing:0.152px">Meatball BS</span></div><div class="c show" style="left:1598.5px;width:100.0px"><span style="letter-spacing:0.056px">Show</span></div><div class="badge">I lo</div><div class="pin"><svg style="left:6.500px;top:7px" width="19" height="19" viewBox="0 0 19 19" fill="none" stroke="#909090" stroke-width="1.900" stroke-linejoin="round" stroke-linecap="round"><path d="M4.300 3.300Q3.300 2.800 3.500 3.900L5 9.300 3.500 14.900Q3.300 15.900 4.300 15.500L15.400 10.100Q16.600 9.300 15.400 8.600z"/><path d="M5.200 9.300h5.400"/></svg><svg style="left:39.300px;top:7.300px" width="18" height="18" viewBox="0 0 18 18" fill="none" stroke="#db4562" stroke-width="1.800" stroke-linecap="round"><circle cx="9" cy="9" r="7.050"/><path d="M7 7l4 4M11 7l-4 4" stroke-width="2.100"/></svg></div></div>
<div class="row P" style="top:593.38px"><div class="mk r"></div><div class="cb"></div><div class="c " style="left:47.0px;width:150.0px"><span style="letter-spacing:-0.025px">C</span></div><div class="c " style="left:219.2px;width:165.0px"><span style="letter-spacing:0.276px">arstecnica</span></div><div class="c " style="left:392.0px;width:153.2px;text-align:right"><span style="letter-spacing:0.470px;margin-right:-0.470px">556</span></div><div class="c " style="left:737.0px;width:40.0px"><span style="letter-spacing:0.219px">[]</span></div><div class="c " style="left:909.0px;width:150.0px"><span style="letter-spacing:0.134px">[A, B, C]</span></div><div class="c " style="left:1081.0px;width:153.4px;text-align:right"><span style="letter-spacing:0.203px;margin-right:-0.203px">3</span></div><div class="c " style="left:1253.7px;width:165.0px"><span style="letter-spacing:0.283px">[C, arstecnica, 556]</span></div><div class="c " style="left:1425.7px;width:160.0px"><span style="letter-spacing:0.152px">Meatball BS</span></div><div class="c show" style="left:1598.5px;width:100.0px"><span style="letter-spacing:0.056px">Show</span></div><div class="badge">I lo</div><div class="pin"><svg style="left:6.500px;top:7px" width="19" height="19" viewBox="0 0 19 19" fill="none" stroke="#909090" stroke-width="1.900" stroke-linejoin="round" stroke-linecap="round"><path d="M4.300 3.300Q3.300 2.800 3.500 3.900L5 9.300 3.500 14.900Q3.300 15.900 4.300 15.500L15.400 10.100Q16.600 9.300 15.400 8.600z"/><path d="M5.200 9.300h5.400"/></svg><svg style="left:39.300px;top:7.300px" width="18" height="18" viewBox="0 0 18 18" fill="none" stroke="#db4562" stroke-width="1.800" stroke-linecap="round"><circle cx="9" cy="9" r="7.050"/><path d="M7 7l4 4M11 7l-4 4" stroke-width="2.100"/></svg></div></div>
<div class="row W" style="top:625.54px"><div class="mk y"></div><div class="cb"></div><div class="c " style="left:47.0px;width:150.0px"><span style="letter-spacing:-0.025px">C</span></div><div class="c " style="left:219.2px;width:165.0px"><span style="letter-spacing:0.380px">eBay - wir-lieben-mo...</span></div><div class="c " style="left:392.0px;width:153.2px;text-align:right"><span style="letter-spacing:0.470px;margin-right:-0.470px">556</span></div><div class="c " style="left:737.0px;width:40.0px"><span style="letter-spacing:0.219px">[]</span></div><div class="c " style="left:909.0px;width:150.0px"><span style="letter-spacing:0.134px">[A, B, C]</span></div><div class="c " style="left:1081.0px;width:153.4px;text-align:right"><span style="letter-spacing:0.203px;margin-right:-0.203px">3</span></div><div class="c " style="left:1253.7px;width:165.0px"><span style="letter-spacing:0.301px">[C, eBay - wir-lieben-...</span></div><div class="c " style="left:1425.7px;width:160.0px"><span style="letter-spacing:0.152px">Meatball BS</span></div><div class="c show" style="left:1598.5px;width:100.0px"><span style="letter-spacing:0.056px">Show</span></div><div class="badge">I lo</div><div class="pin"><svg style="left:6.500px;top:7px" width="19" height="19" viewBox="0 0 19 19" fill="none" stroke="#909090" stroke-width="1.900" stroke-linejoin="round" stroke-linecap="round"><path d="M4.300 3.300Q3.300 2.800 3.500 3.900L5 9.300 3.500 14.900Q3.300 15.900 4.300 15.500L15.400 10.100Q16.600 9.300 15.400 8.600z"/><path d="M5.200 9.300h5.400"/></svg><svg style="left:39.300px;top:7.300px" width="18" height="18" viewBox="0 0 18 18" fill="none" stroke="#db4562" stroke-width="1.800" stroke-linecap="round"><circle cx="9" cy="9" r="7.050"/><path d="M7 7l4 4M11 7l-4 4" stroke-width="2.100"/></svg></div></div>
<div class="row P" style="top:657.70px"><div class="mk r"></div><div class="cb"></div><div class="c " style="left:47.0px;width:150.0px"><span style="letter-spacing:-0.025px">C</span></div><div class="c " style="left:219.2px;width:165.0px"><span style="letter-spacing:0.645px">rc-toy.de</span></div><div class="c " style="left:392.0px;width:153.2px;text-align:right"><span style="letter-spacing:0.470px;margin-right:-0.470px">556</span></div><div class="c " style="left:737.0px;width:40.0px"><span style="letter-spacing:0.219px">[]</span></div><div class="c " style="left:909.0px;width:150.0px"><span style="letter-spacing:0.134px">[A, B, C]</span></div><div class="c " style="left:1081.0px;width:153.4px;text-align:right"><span style="letter-spacing:0.203px;margin-right:-0.203px">3</span></div><div class="c " style="left:1253.7px;width:165.0px"><span style="letter-spacing:0.448px">[C, rc-toy.de, 556]</span></div><div class="c " style="left:1425.7px;width:160.0px"><span style="letter-spacing:0.152px">Meatball BS</span></div><div class="c show" style="left:1598.5px;width:100.0px"><span style="letter-spacing:0.056px">Show</span></div><div class="badge">I lo</div><div class="pin"><svg style="left:6.500px;top:7px" width="19" height="19" viewBox="0 0 19 19" fill="none" stroke="#909090" stroke-width="1.900" stroke-linejoin="round" stroke-linecap="round"><path d="M4.300 3.300Q3.300 2.800 3.500 3.900L5 9.300 3.500 14.900Q3.300 15.900 4.300 15.500L15.400 10.100Q16.600 9.300 15.400 8.600z"/><path d="M5.200 9.300h5.400"/></svg><svg style="left:39.300px;top:7.300px" width="18" height="18" viewBox="0 0 18 18" fill="none" stroke="#db4562" stroke-width="1.800" stroke-linecap="round"><circle cx="9" cy="9" r="7.050"/><path d="M7 7l4 4M11 7l-4 4" stroke-width="2.100"/></svg></div></div>
<div class="row W" style="top:689.86px"><div class="mk r"></div><div class="cb"></div><div class="c " style="left:47.0px;width:150.0px"><span style="letter-spacing:-0.025px">C</span></div><div class="c " style="left:219.2px;width:165.0px"><span style="letter-spacing:0.025px">Banger AG</span></div><div class="c " style="left:392.0px;width:153.2px;text-align:right"><span style="letter-spacing:0.470px;margin-right:-0.470px">556</span></div><div class="c " style="left:737.0px;width:40.0px"><span style="letter-spacing:0.219px">[]</span></div><div class="c " style="left:909.0px;width:150.0px"><span style="letter-spacing:0.134px">[A, B, C]</span></div><div class="c " style="left:1081.0px;width:153.4px;text-align:right"><span style="letter-spacing:0.203px;margin-right:-0.203px">3</span></div><div class="c " style="left:1253.7px;width:165.0px"><span style="letter-spacing:0.145px">[C, Banger AG, 556]</span></div><div class="c " style="left:1425.7px;width:160.0px"><span style="letter-spacing:0.152px">Meatball BS</span></div><div class="c show" style="left:1598.5px;width:100.0px"><span style="letter-spacing:0.056px">Show</span></div><div class="badge">I lo</div><div class="pin"><svg style="left:6.500px;top:7px" width="19" height="19" viewBox="0 0 19 19" fill="none" stroke="#909090" stroke-width="1.900" stroke-linejoin="round" stroke-linecap="round"><path d="M4.300 3.300Q3.300 2.800 3.500 3.900L5 9.300 3.500 14.900Q3.300 15.900 4.300 15.500L15.400 10.100Q16.600 9.300 15.400 8.600z"/><path d="M5.200 9.300h5.400"/></svg><svg style="left:39.300px;top:7.300px" width="18" height="18" viewBox="0 0 18 18" fill="none" stroke="#db4562" stroke-width="1.800" stroke-linecap="round"><circle cx="9" cy="9" r="7.050"/><path d="M7 7l4 4M11 7l-4 4" stroke-width="2.100"/></svg></div></div>
<div class="row P" style="top:722.02px"><div class="mk r"></div><div class="cb"></div><div class="c " style="left:47.0px;width:150.0px"><span style="letter-spacing:-0.025px">C</span></div><div class="c " style="left:219.2px;width:165.0px"><span style="letter-spacing:-0.007px">Meat XL</span></div><div class="c " style="left:392.0px;width:153.2px;text-align:right"><span style="letter-spacing:0.881px;margin-right:-0.881px">6654</span></div><div class="c " style="left:737.0px;width:40.0px"><span style="letter-spacing:0.219px">[]</span></div><div class="c " style="left:909.0px;width:150.0px"><span style="letter-spacing:0.134px">[A, B, C]</span></div><div class="c " style="left:1081.0px;width:153.4px;text-align:right"><span style="letter-spacing:0.203px;margin-right:-0.203px">3</span></div><div class="c " style="left:1253.7px;width:165.0px"><span style="letter-spacing:0.222px">[C, Meat XL, 6654]</span></div><div class="c " style="left:1425.7px;width:160.0px"><span style="letter-spacing:0.152px">Meatball BS</span></div><div class="c show" style="left:1598.5px;width:100.0px"><span style="letter-spacing:0.056px">Show</span></div><div class="badge">I lo</div><div class="pin"><svg style="left:6.500px;top:7px" width="19" height="19" viewBox="0 0 19 19" fill="none" stroke="#909090" stroke-width="1.900" stroke-linejoin="round" stroke-linecap="round"><path d="M4.300 3.300Q3.300 2.800 3.500 3.900L5 9.300 3.500 14.900Q3.300 15.900 4.300 15.500L15.400 10.100Q16.600 9.300 15.400 8.600z"/><path d="M5.200 9.300h5.400"/></svg><svg style="left:39.300px;top:7.300px" width="18" height="18" viewBox="0 0 18 18" fill="none" stroke="#db4562" stroke-width="1.800" stroke-linecap="round"><circle cx="9" cy="9" r="7.050"/><path d="M7 7l4 4M11 7l-4 4" stroke-width="2.100"/></svg></div></div>
<div class="row P" style="top:754.18px"><div class="mk r"></div><div class="cb"></div><div class="c " style="left:47.0px;width:150.0px"><span style="letter-spacing:-0.025px">C</span></div><div class="c " style="left:219.2px;width:165.0px"><span style="letter-spacing:-0.441px">eBay</span></div><div class="c " style="left:392.0px;width:153.2px;text-align:right"><span style="letter-spacing:-1.278px;margin-right:1.278px">12</span></div><div class="c " style="left:737.0px;width:40.0px"><span style="letter-spacing:0.219px">[]</span></div><div class="c " style="left:909.0px;width:150.0px"><span style="letter-spacing:0.134px">[A, B, C]</span></div><div class="c " style="left:1081.0px;width:153.4px;text-align:right"><span style="letter-spacing:0.203px;margin-right:-0.203px">3</span></div><div class="c " style="left:1253.7px;width:165.0px"><span style="letter-spacing:0.041px">[C, eBay, 12]</span></div><div class="c " style="left:1425.7px;width:160.0px"><span style="letter-spacing:0.152px">Meatball BS</span></div><div class="c show" style="left:1598.5px;width:100.0px"><span style="letter-spacing:0.056px">Show</span></div><div class="badge">I lo</div><div class="pin"><svg style="left:6.500px;top:7px" width="19" height="19" viewBox="0 0 19 19" fill="none" stroke="#909090" stroke-width="1.900" stroke-linejoin="round" stroke-linecap="round"><path d="M4.300 3.300Q3.300 2.800 3.500 3.900L5 9.300 3.500 14.900Q3.300 15.900 4.300 15.500L15.400 10.100Q16.600 9.300 15.400 8.600z"/><path d="M5.200 9.300h5.400"/></svg><svg style="left:39.300px;top:7.300px" width="18" height="18" viewBox="0 0 18 18" fill="none" stroke="#db4562" stroke-width="1.800" stroke-linecap="round"><circle cx="9" cy="9" r="7.050"/><path d="M7 7l4 4M11 7l-4 4" stroke-width="2.100"/></svg></div></div>
<div class="row G" style="top:786.34px"><div class="mk y"></div><div class="cb"></div><div class="c " style="left:47.0px;width:150.0px"><span style="letter-spacing:-0.025px">C</span></div><div class="c " style="left:219.2px;width:165.0px"><span style="letter-spacing:-0.237px">MealXXXL</span></div><div class="c " style="left:392.0px;width:153.2px;text-align:right"><span style="letter-spacing:0.881px;margin-right:-0.881px">6654</span></div><div class="c " style="left:737.0px;width:40.0px"><span style="letter-spacing:0.219px">[]</span></div><div class="c " style="left:909.0px;width:150.0px"><span style="letter-spacing:0.134px">[A, B, C]</span></div><div class="c " style="left:1081.0px;width:153.4px;text-align:right"><span style="letter-spacing:0.203px;margin-right:-0.203px">3</span></div><div class="c " style="left:1253.7px;width:165.0px"><span style="letter-spacing:0.186px">[C, MealXXXL, 6654]</span></div><div class="c " style="left:1425.7px;width:160.0px"><span style="letter-spacing:0.152px">Meatball BS</span></div><div class="c show" style="left:1598.5px;width:100.0px"><span style="letter-spacing:0.056px">Show</span></div><div class="badge">I lo</div><div class="pin"><svg style="left:6.500px;top:7px" width="19" height="19" viewBox="0 0 19 19" fill="none" stroke="#909090" stroke-width="1.900" stroke-linejoin="round" stroke-linecap="round"><path d="M4.300 3.300Q3.300 2.800 3.500 3.900L5 9.300 3.500 14.900Q3.300 15.900 4.300 15.500L15.400 10.100Q16.600 9.300 15.400 8.600z"/><path d="M5.200 9.300h5.400"/></svg><svg style="left:39.300px;top:7.300px" width="18" height="18" viewBox="0 0 18 18" fill="none" stroke="#db4562" stroke-width="1.800" stroke-linecap="round"><circle cx="9" cy="9" r="7.050"/><path d="M7 7l4 4M11 7l-4 4" stroke-width="2.100"/></svg></div></div>
<div class="row W" style="top:818.50px"><div class="cb"></div><div class="c " style="left:47.0px;width:150.0px"><span style="letter-spacing:-0.025px">C</span></div><div class="c " style="left:219.2px;width:165.0px"><span style="letter-spacing:-0.007px">Meat XL</span></div><div class="c " style="left:392.0px;width:153.2px;text-align:right"><span style="letter-spacing:0.470px;margin-right:-0.470px">556</span></div><div class="c " style="left:737.0px;width:40.0px"><span style="letter-spacing:0.219px">[]</span></div><div class="c " style="left:909.0px;width:150.0px"><span style="letter-spacing:0.134px">[A, B, C]</span></div><div class="c " style="left:1081.0px;width:153.4px;text-align:right"><span style="letter-spacing:0.203px;margin-right:-0.203px">3</span></div><div class="c " style="left:1253.7px;width:165.0px"><span style="letter-spacing:0.240px">[C, Meat XL, 556]</span></div><div class="c " style="left:1425.7px;width:160.0px"><span style="letter-spacing:0.152px">Meatball BS</span></div><div class="c show" style="left:1598.5px;width:100.0px"><span style="letter-spacing:0.056px">Show</span></div><div class="badge">I lo</div><div class="pin"><svg style="left:6.500px;top:7px" width="19" height="19" viewBox="0 0 19 19" fill="none" stroke="#909090" stroke-width="1.900" stroke-linejoin="round" stroke-linecap="round"><path d="M4.300 3.300Q3.300 2.800 3.500 3.900L5 9.300 3.500 14.900Q3.300 15.900 4.300 15.500L15.400 10.100Q16.600 9.300 15.400 8.600z"/><path d="M5.200 9.300h5.400"/></svg><svg style="left:39.300px;top:7.300px" width="18" height="18" viewBox="0 0 18 18" fill="none" stroke="#db4562" stroke-width="1.800" stroke-linecap="round"><circle cx="9" cy="9" r="7.050"/><path d="M7 7l4 4M11 7l-4 4" stroke-width="2.100"/></svg></div></div>
<div class="row P" style="top:850.66px"><div class="mk r"></div><div class="cb"></div><div class="c " style="left:47.0px;width:150.0px"><span style="letter-spacing:-0.025px">C</span></div><div class="c " style="left:219.2px;width:165.0px"><span style="letter-spacing:0.226px">Amazon Marketplace ...</span></div><div class="c " style="left:392.0px;width:153.2px;text-align:right"><span style="letter-spacing:-1.278px;margin-right:1.278px">12</span></div><div class="c " style="left:737.0px;width:40.0px"><span style="letter-spacing:0.219px">[]</span></div><div class="c " style="left:909.0px;width:150.0px"><span style="letter-spacing:0.134px">[A, B, C]</span></div><div class="c " style="left:1081.0px;width:153.4px;text-align:right"><span style="letter-spacing:0.203px;margin-right:-0.203px">3</span></div><div class="c " style="left:1253.7px;width:165.0px"><span style="letter-spacing:0.223px">[C, Amazon Marketpl...</span></div><div class="c " style="left:1425.7px;width:160.0px"><span style="letter-spacing:0.152px">Meatball BS</span></div><div class="c show" style="left:1598.5px;width:100.0px"><span style="letter-spacing:0.056px">Show</span></div><div class="badge">I lo</div><div class="pin"><svg style="left:6.500px;top:7px" width="19" height="19" viewBox="0 0 19 19" fill="none" stroke="#909090" stroke-width="1.900" stroke-linejoin="round" stroke-linecap="round"><path d="M4.300 3.300Q3.300 2.800 3.500 3.900L5 9.300 3.500 14.900Q3.300 15.900 4.300 15.500L15.400 10.100Q16.600 9.300 15.400 8.600z"/><path d="M5.200 9.300h5.400"/></svg><svg style="left:39.300px;top:7.300px" width="18" height="18" viewBox="0 0 18 18" fill="none" stroke="#db4562" stroke-width="1.800" stroke-linecap="round"><circle cx="9" cy="9" r="7.050"/><path d="M7 7l4 4M11 7l-4 4" stroke-width="2.100"/></svg></div></div>
<div class="row W" style="top:882.82px"><div class="mk y"></div><div class="cb"></div><div class="c " style="left:47.0px;width:150.0px"><span style="letter-spacing:-0.025px">C</span></div><div class="c " style="left:219.2px;width:165.0px"><span style="letter-spacing:0.276px">arstecnica</span></div><div class="c " style="left:392.0px;width:153.2px;text-align:right"><span style="letter-spacing:0.881px;margin-right:-0.881px">6654</span></div><div class="c " style="left:737.0px;width:40.0px"><span style="letter-spacing:0.219px">[]</span></div><div class="c " style="left:909.0px;width:150.0px"><span style="letter-spacing:0.134px">[A, B, C]</span></div><div class="c " style="left:1081.0px;width:153.4px;text-align:right"><span style="letter-spacing:0.203px;margin-right:-0.203px">3</span></div><div class="c " style="left:1253.7px;width:165.0px"><span style="letter-spacing:0.385px">[C, arstecnica, 6654]</span></div><div class="c " style="left:1425.7px;width:160.0px"><span style="letter-spacing:0.152px">Meatball BS</span></div><div class="c show" style="left:1598.5px;width:100.0px"><span style="letter-spacing:0.056px">Show</span></div><div class="badge">I lo</div><div class="pin"><svg style="left:6.500px;top:7px" width="19" height="19" viewBox="0 0 19 19" fill="none" stroke="#909090" stroke-width="1.900" stroke-linejoin="round" stroke-linecap="round"><path d="M4.300 3.300Q3.300 2.800 3.500 3.900L5 9.300 3.500 14.900Q3.300 15.900 4.300 15.500L15.400 10.100Q16.600 9.300 15.400 8.600z"/><path d="M5.200 9.300h5.400"/></svg><svg style="left:39.300px;top:7.300px" width="18" height="18" viewBox="0 0 18 18" fill="none" stroke="#db4562" stroke-width="1.800" stroke-linecap="round"><circle cx="9" cy="9" r="7.050"/><path d="M7 7l4 4M11 7l-4 4" stroke-width="2.100"/></svg></div></div>
<div class="row G" style="top:914.98px"><div class="mk y"></div><div class="cb"></div><div class="c " style="left:47.0px;width:150.0px"><span style="letter-spacing:-0.025px">C</span></div><div class="c " style="left:219.2px;width:165.0px"><span style="letter-spacing:0.477px">asdf</span></div><div class="c " style="left:392.0px;width:153.2px;text-align:right"><span style="letter-spacing:0.881px;margin-right:-0.881px">6654</span></div><div class="c " style="left:737.0px;width:40.0px"><span style="letter-spacing:0.219px">[]</span></div><div class="c " style="left:909.0px;width:150.0px"><span style="letter-spacing:0.134px">[A, B, C]</span></div><div class="c " style="left:1081.0px;width:153.4px;text-align:right"><span style="letter-spacing:0.203px;margin-right:-0.203px">3</span></div><div class="c " style="left:1253.7px;width:165.0px"><span style="letter-spacing:0.324px">[C, asdf, 6654]</span></div><div class="c " style="left:1425.7px;width:160.0px"><span style="letter-spacing:0.152px">Meatball BS</span></div><div class="c show" style="left:1598.5px;width:100.0px"><span style="letter-spacing:0.056px">Show</span></div><div class="badge">I lo</div><div class="pin"><svg style="left:6.500px;top:7px" width="19" height="19" viewBox="0 0 19 19" fill="none" stroke="#909090" stroke-width="1.900" stroke-linejoin="round" stroke-linecap="round"><path d="M4.300 3.300Q3.300 2.800 3.500 3.900L5 9.300 3.500 14.900Q3.300 15.900 4.300 15.500L15.400 10.100Q16.600 9.300 15.400 8.600z"/><path d="M5.200 9.300h5.400"/></svg><svg style="left:39.300px;top:7.300px" width="18" height="18" viewBox="0 0 18 18" fill="none" stroke="#db4562" stroke-width="1.800" stroke-linecap="round"><circle cx="9" cy="9" r="7.050"/><path d="M7 7l4 4M11 7l-4 4" stroke-width="2.100"/></svg></div></div>
<div class="row P" style="top:947.14px"><div class="mk r"></div><div class="cb"></div><div class="c " style="left:47.0px;width:150.0px"><span style="letter-spacing:-0.025px">C</span></div><div class="c " style="left:219.2px;width:165.0px"><span style="letter-spacing:0.380px">eBay - modellsport-b...</span></div><div class="c " style="left:392.0px;width:153.2px;text-align:right"><span style="letter-spacing:0.881px;margin-right:-0.881px">6654</span></div><div class="c " style="left:737.0px;width:40.0px"><span style="letter-spacing:0.219px">[]</span></div><div class="c " style="left:909.0px;width:150.0px"><span style="letter-spacing:0.134px">[A, B, C]</span></div><div class="c " style="left:1081.0px;width:153.4px;text-align:right"><span style="letter-spacing:0.203px;margin-right:-0.203px">3</span></div><div class="c " style="left:1253.7px;width:165.0px"><span style="letter-spacing:0.243px">[C, eBay - modellspor...</span></div><div class="c " style="left:1425.7px;width:160.0px"><span style="letter-spacing:0.152px">Meatball BS</span></div><div class="c show" style="left:1598.5px;width:100.0px"><span style="letter-spacing:0.056px">Show</span></div><div class="badge">I lo</div><div class="pin"><svg style="left:6.500px;top:7px" width="19" height="19" viewBox="0 0 19 19" fill="none" stroke="#909090" stroke-width="1.900" stroke-linejoin="round" stroke-linecap="round"><path d="M4.300 3.300Q3.300 2.800 3.500 3.900L5 9.300 3.500 14.900Q3.300 15.900 4.300 15.500L15.400 10.100Q16.600 9.300 15.400 8.600z"/><path d="M5.200 9.300h5.400"/></svg><svg style="left:39.300px;top:7.300px" width="18" height="18" viewBox="0 0 18 18" fill="none" stroke="#db4562" stroke-width="1.800" stroke-linecap="round"><circle cx="9" cy="9" r="7.050"/><path d="M7 7l4 4M11 7l-4 4" stroke-width="2.100"/></svg></div></div>
<div class="row P" style="top:979.30px"><div class="mk r"></div><div class="cb"></div><div class="c " style="left:47.0px;width:150.0px"><span style="letter-spacing:-0.025px">C</span></div><div class="c " style="left:219.2px;width:165.0px"><span style="letter-spacing:0.184px">CMC Versand</span></div><div class="c " style="left:392.0px;width:153.2px;text-align:right"><span style="letter-spacing:-1.278px;margin-right:1.278px">12</span></div><div class="c " style="left:737.0px;width:40.0px"><span style="letter-spacing:0.219px">[]</span></div><div class="c " style="left:909.0px;width:150.0px"><span style="letter-spacing:0.134px">[A, B, C]</span></div><div class="c " style="left:1081.0px;width:153.4px;text-align:right"><span style="letter-spacing:0.203px;margin-right:-0.203px">3</span></div><div class="c " style="left:1253.7px;width:165.0px"><span style="letter-spacing:0.086px">[C, CMC Versand, 12]</span></div><div class="c " style="left:1425.7px;width:160.0px"><span style="letter-spacing:0.152px">Meatball BS</span></div><div class="c show" style="left:1598.5px;width:100.0px"><span style="letter-spacing:0.056px">Show</span></div><div class="badge">I lo</div><div class="pin"><svg style="left:6.500px;top:7px" width="19" height="19" viewBox="0 0 19 19" fill="none" stroke="#909090" stroke-width="1.900" stroke-linejoin="round" stroke-linecap="round"><path d="M4.300 3.300Q3.300 2.800 3.500 3.900L5 9.300 3.500 14.900Q3.300 15.900 4.300 15.500L15.400 10.100Q16.600 9.300 15.400 8.600z"/><path d="M5.200 9.300h5.400"/></svg><svg style="left:39.300px;top:7.300px" width="18" height="18" viewBox="0 0 18 18" fill="none" stroke="#db4562" stroke-width="1.800" stroke-linecap="round"><circle cx="9" cy="9" r="7.050"/><path d="M7 7l4 4M11 7l-4 4" stroke-width="2.100"/></svg></div></div>
<div class="row P" style="top:1011.46px"><div class="mk r"></div><div class="cb"></div><div class="c " style="left:47.0px;width:150.0px"><span style="letter-spacing:-0.025px">C</span></div><div class="c " style="left:219.2px;width:165.0px"><span style="letter-spacing:0.226px">Amazon Marketplace ...</span></div><div class="c " style="left:392.0px;width:153.2px;text-align:right"><span style="letter-spacing:0.470px;margin-right:-0.470px">556</span></div><div class="c " style="left:737.0px;width:40.0px"><span style="letter-spacing:0.219px">[]</span></div><div class="c " style="left:909.0px;width:150.0px"><span style="letter-spacing:0.134px">[A, B, C]</span></div><div class="c " style="left:1081.0px;width:153.4px;text-align:right"><span style="letter-spacing:0.203px;margin-right:-0.203px">3</span></div><div class="c " style="left:1253.7px;width:165.0px"><span style="letter-spacing:0.223px">[C, Amazon Marketpl...</span></div><div class="c " style="left:1425.7px;width:160.0px"><span style="letter-spacing:0.152px">Meatball BS</span></div><div class="c show" style="left:1598.5px;width:100.0px"><span style="letter-spacing:0.056px">Show</span></div><div class="badge">I lo</div><div class="pin"><svg style="left:6.500px;top:7px" width="19" height="19" viewBox="0 0 19 19" fill="none" stroke="#909090" stroke-width="1.900" stroke-linejoin="round" stroke-linecap="round"><path d="M4.300 3.300Q3.300 2.800 3.500 3.900L5 9.300 3.500 14.900Q3.300 15.900 4.300 15.500L15.400 10.100Q16.600 9.300 15.400 8.600z"/><path d="M5.200 9.300h5.400"/></svg><svg style="left:39.300px;top:7.300px" width="18" height="18" viewBox="0 0 18 18" fill="none" stroke="#db4562" stroke-width="1.800" stroke-linecap="round"><circle cx="9" cy="9" r="7.050"/><path d="M7 7l4 4M11 7l-4 4" stroke-width="2.100"/></svg></div></div>
<div class="abs" style="left:1806.500px;top:176px;width:4px;height:851px;background:linear-gradient(to right,rgba(0,0,0,0),rgba(0,0,0,.06))"></div>
<div class="abs" style="left:23px;top:1025.200px;width:1852.500px;height:3px;background:#ffecef"></div>
<div class="abs" style="left:1875.500px;top:176px;width:15.500px;height:852px;background:#f7f7f8"></div>
<div class="abs" style="left:1876.700px;top:195.300px;width:14.300px;height:203.500px;background:#c5c5c5"></div>
<svg class="abs" style="left:1879.200px;top:181.700px" width="10" height="8" viewBox="0 0 10 8"><path d="M1 6.500 5 2l4 4.500z" fill="#a3a3a3"/></svg>
<svg class="abs" style="left:1879px;top:1011.600px" width="10" height="8" viewBox="0 0 10 8"><path d="M1 1.500h8L5 6z" fill="#505050"/></svg>
<div class="abs" style="left:20px;top:1027px;width:1855.500px;height:19px;background:#f1f1f1"></div>
<div class="abs" style="left:40px;top:1027.500px;width:660px;height:14.500px;background:#c5c5c5"></div>
<svg class="abs" style="left:26px;top:1030px" width="8" height="10" viewBox="0 0 8 10"><path d="M6.500 1v8L2 5z" fill="#a3a3a3"/></svg>
<svg class="abs" style="left:1862px;top:1030.200px" width="8" height="10" viewBox="0 0 8 10"><path d="M1.500 1v8L6 5z" fill="#505050"/></svg>
<div class="abs" style="left:1875.500px;top:1026px;width:15.500px;height:20.500px;background:#dcdcdc"></div>
<div class="abs" style="left:19.500px;top:111px;width:1px;height:916px;background:#e6e6e6"></div>
<div class="abs" id="menu">
<div style="position:absolute;left:0;top:2px;width:97px;height:31.500px;background:#f5f5f7;border:1px solid #a9d0e4"></div>
<div class="mi" style="top:7.5px;color:#5e5e5e">Edit</div>
<div class="mi" style="top:40.5px">Calculate</div>
<div class="mi" style="top:72.5px">Submit</div>
<div class="mi" style="top:105.0px">Withdraw</div>
<div class="mi" style="top:137.5px">Approve</div>
<div class="mi" style="top:169.5px">Deny</div>
</div>
<div class="abs" style="left:1701.700px;top:86.600px;width:57.800px;height:57.800px;border-radius:50%;border:1.300px solid rgba(150,200,235,.75);background:rgba(255,255,255,.28)"></div>
<svg class="abs" style="left:1728px;top:113px" width="40" height="42" viewBox="0 0 40 42"><path d="M3.500 3.500 25.400 15.400 18.700 18.700 23.900 25.600 21 28.400 14.600 22.300 10.400 28.300z" fill="#f0142f"/><text x="24.200" y="37.200" textLength="11.800" lengthAdjust="spacingAndGlyphs" font-family="Liberation Sans, sans-serif" font-style="italic" font-weight="bold" font-size="18" fill="#55b8e8">fx</text></svg>
<div class="hbox" style="left:18px;top:90px;width:222px;height:94px"></div>
<div class="hbox" style="left:1593px;top:61px;width:222px;height:94px"></div>
<div class="abs" style="left:0;top:0;width:1px;height:1048px;background:#000"></div>
<div class="abs" style="left:1891px;top:0;width:1px;height:1048px;background:#000"></div>
<div class="abs" style="left:0;top:1046.500px;width:1892px;height:1.500px;background:#000"></div>
</body></html>
